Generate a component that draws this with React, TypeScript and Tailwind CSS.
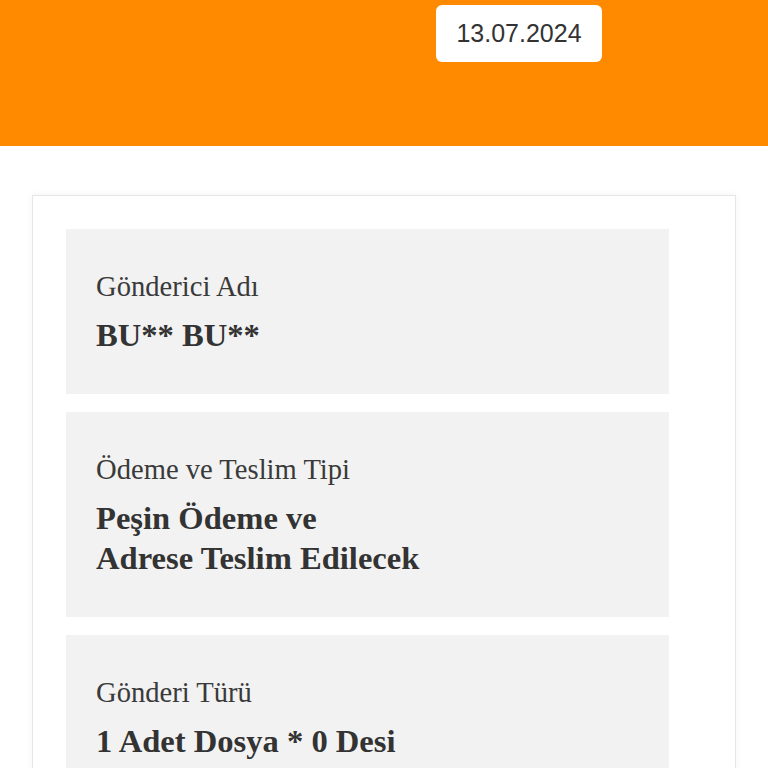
import React from 'react';

interface InfoItem {
    label: string;
    value: string[];
}

const items: InfoItem[] = [
    { label: 'Gönderici Adı', value: ['BU** BU**'] },
    { label: 'Ödeme ve Teslim Tipi', value: ['Peşin Ödeme ve', 'Adrese Teslim Edilecek'] },
    { label: 'Gönderi Türü', value: ['1 Adet Dosya * 0 Desi'] },
    { label: 'Alıcı Adı', value: ['BU** BU**'] },
];

const InfoBox = ({ item }: { item: InfoItem }) => (
    <div className="bg-[#f2f2f2] pl-[30px] pr-4 pt-[38px] pb-[39px]">
        <div className="text-[28.6px] leading-[40px] text-[#3a3a3a]">{item.label}</div>
        <div className="mt-2 text-[32.6px] leading-[40px] font-bold text-[#333]">
            {item.value.map((line, i) => (
                <div key={i}>{line}</div>
            ))}
        </div>
    </div>
);

const App = () => {
    return (
        <div className="min-h-screen bg-white font-['Liberation_Serif',serif]">
            {/* header */}
            <div className="h-[146px] bg-[#ff8a00] pt-[5px] pl-[436px]">
                <div className="w-[166px] h-[57px] rounded-[6px] bg-white flex items-center justify-center font-['Liberation_Sans',Arial,sans-serif] text-[25px] text-[#333]">
                    13.07.2024
                </div>
            </div>

            <div className="pt-[49px] pl-[32px] pr-[32px]">
                <div className="border border-[#e6e6e6] shadow-[0_0_8px_rgba(0,0,0,0.05)] pt-[33px] pl-[33px] pr-[66px] pb-10">
                    <div className="flex flex-col gap-[18px]">
                        {items.map((item, i) => (
                            <InfoBox key={i} item={item} />
                        ))}
                    </div>
                </div>
            </div>
        </div>
    );
};

export default App;
